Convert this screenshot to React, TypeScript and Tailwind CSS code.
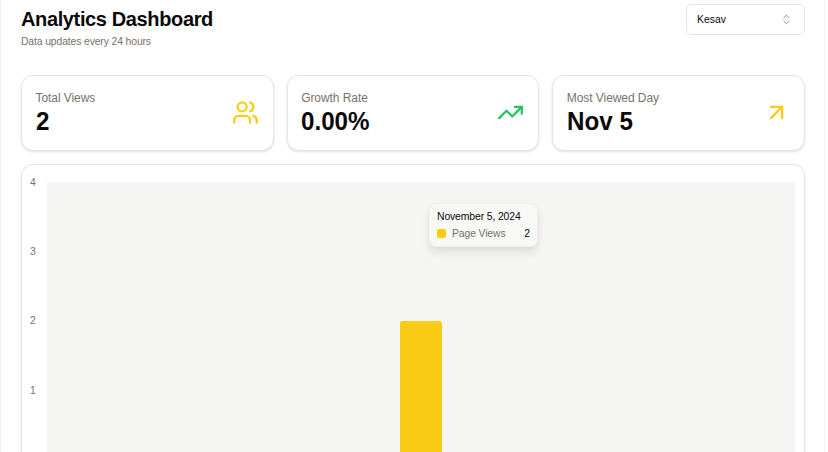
import { ReactNode } from "react";
import { ArrowUpRight, ChevronsUpDown, TrendingUp, Users } from "lucide-react";

function StatCard({ label, value, icon }: { label: string; value: string; icon: ReactNode }) {
  return (
    <div className="flex h-[76px] items-center justify-between rounded-[12px] border border-stone-200 bg-white px-[14px] pb-px shadow">
      <div className="flex flex-col pb-[2px]">
        <span className="-ml-[0.5px] text-[12px] leading-[18px] tracking-[-0.07px] text-stone-500">{label}</span>
        <span className="-ml-[0.5px] origin-left scale-x-[0.93] text-[26px] leading-[28px] font-bold text-stone-950">{value}</span>
      </div>
      {icon}
    </div>
  );
}

function Tooltip() {
  return (
    <div className="absolute top-[20px] left-[382px] flex h-[44px] w-[109px] flex-col justify-center gap-[3px] rounded-[7px] border border-stone-200/50 bg-[#f8f8f7] px-[7px] text-[10.4px] leading-[14px] tracking-[-0.12px] shadow-[0_6px_10px_rgba(0,0,0,0.08),0_2px_4px_rgba(0,0,0,0.04)]">
      <span className="whitespace-nowrap text-stone-950">November 5, 2024</span>
      <div className="flex items-center">
        <span className="mr-[6px] size-[9px] rounded-[2px] bg-[#facc15]" />
        <span className="text-stone-500">Page Views</span>
        <span className="ml-auto text-stone-950">2</span>
      </div>
    </div>
  );
}

export default function App() {
  return (
    <div className="h-[452px] w-[828px] overflow-hidden bg-white font-['Liberation_Sans',Arial,sans-serif]">
      <main className="h-full w-[825px] border-x border-[#f3f3f2] pr-[19px] pl-5">
        <header className="flex h-[75px] items-start justify-between">
          <div className="pt-[6px]">
            <h1 className="text-[20px] leading-[26px] font-bold tracking-[-0.37px] text-stone-950">Analytics Dashboard</h1>
            <p className="pt-[2px] text-[10.4px] leading-[16px] tracking-[-0.13px] text-stone-500">Data updates every 24 hours</p>
          </div>
          <button className="mt-1 flex h-[31px] w-[119px] items-center justify-between rounded-[5px] border border-stone-200 pr-[11px] pl-[10px] text-[10.4px] text-stone-950">
            Kesav
            <ChevronsUpDown size={13} strokeWidth={1.5} className="text-stone-500" />
          </button>
        </header>
        <section className="grid grid-cols-3 gap-[13px]">
          <StatCard label="Total Views" value="2" icon={<Users size={27} className="text-[#facc15]" />} />
          <StatCard label="Growth Rate" value="0.00%" icon={<TrendingUp size={27} className="text-[#22c55e]" />} />
          <StatCard label="Most Viewed Day" value="Nov 5" icon={<ArrowUpRight size={27} className="text-[#facc15]" />} />
        </section>
        <section className="mt-[13px] flex h-[400px] rounded-[12px] border border-stone-200 bg-white pt-[17px] pr-[9px] pl-[8px] shadow">
          <div className="flex w-[17px] flex-col text-[10.4px] leading-none text-stone-500">
            <span className="-mt-[4px] h-[69.2px]">4</span>
            <span className="h-[69.2px]">3</span>
            <span className="h-[69.2px]">2</span>
            <span>1</span>
          </div>
          <div className="relative h-full flex-1 border-t border-dashed border-[#fafafa] bg-[#f5f5f4]">
            <div className="mt-[138px] ml-[353px] h-full w-[42px] rounded-t-[3px] bg-[#facc15]" />
            <Tooltip />
          </div>
        </section>
      </main>
    </div>
  );
}
